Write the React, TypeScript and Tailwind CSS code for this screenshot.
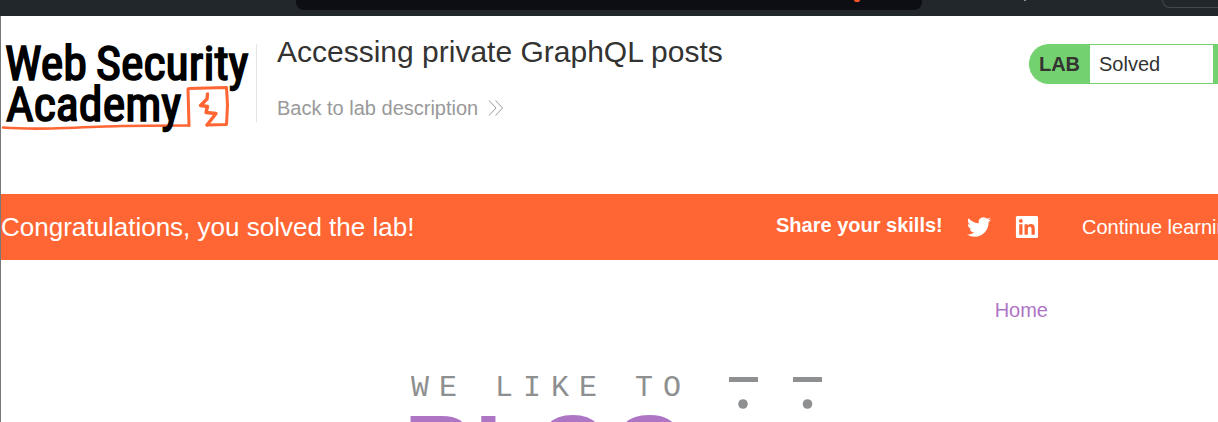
import React from "react";

function BrowserBar() {
  return (
    <div className="flex h-4 w-full shrink-0 items-start overflow-hidden bg-[#22272b]">
      <div className="ml-[296px] flex h-[10px] w-[626px] justify-end rounded-b-lg bg-[#0d0e13] pr-[62px]">
        <span className="h-[2px] w-[6px] rounded-b-full bg-[#fb542b]" />
      </div>
      <span className="ml-[102px] h-px w-[2px] bg-[#8b9095]" />
      <div className="ml-auto h-2 w-14 rounded-bl-lg border-b border-l border-[#43494e]" />
    </div>
  );
}

function AcademyLogo() {
  return (
    <svg
      className="h-[104px] w-[255px] shrink-0"
      viewBox="0 0 255 104"
      role="img"
      aria-label="Web Security Academy"
    >
      <g fill="none" stroke="#ff6633" strokeLinecap="round" strokeLinejoin="round">
        <path strokeWidth="2.6" d="M2 97.500Q28 99.500 65 98T120 96T188 95.500" />
        <path strokeWidth="3" d="M188 95.500L187 59Q187 58.500 188 58.500L225.500 57.500L226.500 75L225.500 94.500L206 95" />
        <path strokeWidth="3.400" d="M206 95L215 83.500L205 82.500L206.500 76.500L199.500 75.500L206 69L206.500 64" />
      </g>
      <g
        fill="#000"
        stroke="#000"
        strokeWidth="1.6"
        fontFamily="'Roboto Condensed', Roboto, sans-serif"
        fontSize="48"
      >
        <text x="4" y="50">Web</text>
        <text x="95" y="50">Security</text>
        <text x="5" y="91">Academy</text>
      </g>
    </svg>
  );
}

function Header() {
  return (
    <header className="flex h-[178px] items-start">
      <div className="flex pt-[14px]">
        <AcademyLogo />
      </div>
      <div className="mt-7 h-[78px] w-px shrink-0 bg-[#e5e5e5]" />
      <div className="ml-5 pt-[18px] whitespace-nowrap">
        <h1 className="text-[30px] leading-9 text-[#333332]">Accessing private GraphQL posts</h1>
        <a href="#description" className="mt-6 flex items-center gap-[10px] text-[20px] leading-7 text-[#999]">
          Back to lab description
          <svg className="size-4" viewBox="0 0 16 16" fill="none" stroke="#999" strokeWidth="1">
            <path d="M1 .5L8 8L1 15.500M7.500 .5L14.500 8L7.500 15.500" />
          </svg>
        </a>
      </div>
      <div className="mt-7 ml-auto flex h-10 w-[189px] shrink-0 overflow-hidden rounded-l-[20px] border-y border-l border-[#73d26f] bg-[#73d26f] text-[20px] text-[#333332]">
        <span className="flex w-[60px] items-center justify-center pr-px font-bold">LAB</span>
        <span className="flex w-[123px] items-center bg-white pl-[9px]">Solved</span>
      </div>
    </header>
  );
}

function SolvedBanner() {
  return (
    <section className="flex h-[66px] items-center overflow-hidden bg-[#ff6633] whitespace-nowrap text-white">
      <h2 className="text-[26px] leading-8">Congratulations, you solved the lab!</h2>
      <div className="ml-auto flex w-[442px] shrink-0 items-center overflow-hidden text-[20px] leading-7">
        <span className="w-[191px] shrink-0 pb-1 font-bold">Share your skills!</span>
        <a href="#twitter" aria-label="Twitter" className="w-12 shrink-0">
          <svg className="size-6" viewBox="0 0 24 24" fill="currentColor">
            <path d="M23.950 4.570a10 10 0 0 1-2.820.770 4.960 4.960 0 0 0 2.160-2.720c-.950.550-2 .950-3.130 1.180a4.920 4.920 0 0 0-8.380 4.480C7.690 8.090 4.070 6.130 1.640 3.160a4.900 4.900 0 0 0-.670 2.480c0 1.710.870 3.210 2.190 4.090a4.900 4.900 0 0 1-2.230-.610v.060a4.920 4.920 0 0 0 3.950 4.830 5 5 0 0 1-2.210.080 4.940 4.940 0 0 0 4.600 3.420A9.870 9.870 0 0 1 0 19.540a14 14 0 0 0 7.550 2.210c9.050 0 14-7.500 14-13.980 0-.210 0-.420-.020-.630a9.940 9.940 0 0 0 2.460-2.550z" />
          </svg>
        </a>
        <a href="#linkedin" aria-label="LinkedIn" className="w-[67px] shrink-0">
          <svg className="size-6" viewBox="-1 -1 26 26" fill="currentColor">
            <path d="M20.450 20.450h-3.560v-5.570c0-1.330-.020-3.040-1.850-3.040-1.850 0-2.140 1.450-2.140 2.940v5.670H9.350V9h3.410v1.560h.050c.480-.900 1.640-1.850 3.370-1.850 3.600 0 4.270 2.370 4.270 5.460v6.280zM5.340 7.430a2.060 2.060 0 1 1 0-4.130 2.060 2.060 0 0 1 0 4.130zm1.780 13.020H3.560V9h3.560v11.450zM22.220 0H1.770C.790 0 0 .770 0 1.730v20.540C0 23.230.790 24 1.770 24h20.450c.980 0 1.780-.770 1.780-1.730V1.730C24 .770 23.200 0 22.220 0z" />
          </svg>
        </a>
        <a href="#continue" className="ml-auto w-[136px] overflow-hidden">Continue learning</a>
      </div>
    </section>
  );
}

function BlogHero() {
  return (
    <main className="pt-9">
      <nav className="flex justify-end pr-[170px] text-[20px] leading-7 text-[#ae75c5]">
        <a href="#home">Home</a>
      </nav>
      <div className="ml-[410px] flex items-start pt-[46px]">
        <p className="w-[317px] pt-[2px] font-['Liberation_Mono',monospace] text-[30px] leading-8 tracking-[10px] whitespace-nowrap text-[#8e8f90]">
          WE LIKE TO
        </p>
        <svg className="mt-[7px] h-8 w-[94px]" viewBox="0 0 94 32" fill="#8e8f90" aria-hidden="true">
          <rect x="1" width="29" height="5" />
          <rect x="65" width="29" height="5" />
          <circle cx="15" cy="27" r="4.800" />
          <circle cx="79.500" cy="27" r="4.800" />
        </svg>
      </div>
      <p className="ml-[403px] text-[98px] leading-[82px] font-bold text-[#ae75c5]">BLOG</p>
    </main>
  );
}

export default function App() {
  return (
    <div className="flex h-screen flex-col overflow-hidden bg-white font-['Liberation_Sans',Arial,sans-serif]">
      <BrowserBar />
      <div className="flex-1 border-l border-[#77787a]">
        <Header />
        <SolvedBanner />
        <BlogHero />
      </div>
    </div>
  );
}
